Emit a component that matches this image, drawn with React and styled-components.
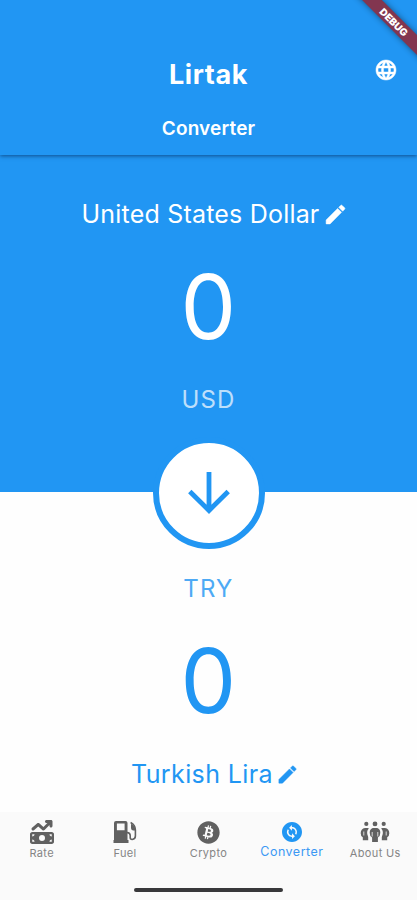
import React from "react";
import styled, { createGlobalStyle } from "styled-components";
import { MdChangeCircle, MdEdit, MdLanguage } from "react-icons/md";
import { FaBitcoin, FaMoneyBillTrendUp } from "react-icons/fa6";

const BLUE = "#2196f3";

const GlobalStyle = createGlobalStyle`
  * { box-sizing: border-box; }
  body { margin: 0; background: #fff; font-family: Inter, "Noto Sans", sans-serif; }
`;

const Screen = styled.div`
  position: relative;
  display: flex;
  flex-direction: column;
  width: 417px;
  height: 900px;
  overflow: hidden;
  background: #fefefe;
`;

const Header = styled.header`
  position: relative;
  z-index: 1;
  flex: none;
  display: grid;
  grid-template-columns: 62px 1fr 62px;
  grid-template-rows: 34px 18px;
  row-gap: 28px;
  align-content: start;
  align-items: center;
  height: 155px;
  padding-top: 58px;
  background: ${BLUE};
  color: #fff;
  text-align: center;
  box-shadow: 0 1px 4px rgba(0, 30, 70, 0.6);
`;

const Title = styled.h1`
  grid-column: 2;
  margin: 0;
  font-size: 27px;
  line-height: 34px;
  font-weight: 700;
  letter-spacing: 0.6px;
`;

const Subtitle = styled.h2`
  grid-column: 2;
  grid-row: 2;
  margin: 0;
  font-size: 19px;
  line-height: 18px;
  font-weight: 600;
  letter-spacing: 0.15px;
`;

const LanguageButton = styled.button`
  display: flex;
  justify-content: center;
  margin: -11px 0 0;
  padding: 0;
  border: 0;
  background: none;
  color: #fff;
  font-size: 24px;

  path:not([fill="none"]) { stroke: #fff; stroke-width: 0.5px; }
`;

const Panel = styled.section`
  flex: none;
  display: flex;
  flex-direction: column;
  align-items: center;
  height: ${({ $height }) => $height}px;
  padding-top: ${({ $top }) => $top}px;
  background: ${({ $bg }) => $bg};
  color: ${({ $color }) => $color};
`;

const CurrencyName = styled.div`
  display: flex;
  align-items: center;
  gap: ${({ $gap }) => $gap}px;
  height: 32px;
  margin-left: ${({ $shift }) => $shift}px;
  font-size: 25px;
  line-height: 32px;
  letter-spacing: ${({ $spacing }) => $spacing}px;
  white-space: nowrap;

  svg { font-size: ${({ $icon }) => $icon}px; }
  path:not([fill="none"]) {
    stroke: currentColor;
    stroke-width: 0.5px;
    stroke-linejoin: round;
  }
`;

const Amount = styled.div`
  height: 100px;
  margin: ${({ $margin }) => $margin};
  font-size: 90px;
  line-height: 100px;
  font-weight: 400;
  transform: scaleX(0.98);
`;

const Code = styled.div`
  height: 30px;
  font-size: 24px;
  line-height: 30px;
  letter-spacing: 1.2px;
  opacity: ${({ $opacity }) => $opacity};
`;

const SwapButton = styled.button`
  position: absolute;
  left: 153px;
  top: 437px;
  z-index: 2;
  display: grid;
  place-items: center;
  width: 112px;
  height: 112px;
  padding: 0;
  border: 6px solid ${BLUE};
  border-radius: 50%;
  background: #fff;
  color: ${BLUE};
`;

const Footer = styled.nav`
  flex: none;
  display: flex;
  flex-direction: column;
  height: 88px;
  background: #fafafa;
`;

const Tabs = styled.div`
  display: grid;
  grid-template-columns: repeat(5, 1fr);
  height: 76px;
`;

const Tab = styled.div`
  display: flex;
  flex-direction: column;
  align-items: center;
  padding-top: 8px;
  color: ${({ $active }) => ($active ? BLUE : "#616161")};
`;

const TabIcon = styled.div`
  display: grid;
  place-items: center;
  height: 24px;
  font-size: 24px;

  svg { display: block; }
`;

const TabLabel = styled.span`
  margin-top: ${({ $active }) => ($active ? 0 : 1)}px;
  font-size: ${({ $active }) => ($active ? 12.5 : 11)}px;
  line-height: 16px;
  letter-spacing: ${({ $active }) => ($active ? 0.5 : 0.35)}px;
  white-space: nowrap;
  color: ${({ $active }) => ($active ? "#3b98f4" : "#858585")};
`;

const HomeIndicator = styled.div`
  align-self: center;
  width: 149px;
  height: 4px;
  border-radius: 2px;
  background: #38383a;
`;

const DebugRibbon = styled.div`
  position: absolute;
  top: 15px;
  left: 340px;
  z-index: 3;
  width: 108px;
  height: 14px;
  transform: rotate(45deg);
  background: #823650;
  box-shadow: 0 0 6px rgba(0, 0, 0, 0.45);
  color: #fff;
  font-size: 10px;
  line-height: 14px;
  font-weight: 900;
  text-align: center;
`;

const ArrowDown = () => (
  <svg width="42" height="42" viewBox="0 0 42 42" fill="none" stroke="currentColor" strokeWidth="4.8">
    <path d="M21 0v38M1.8 19.5 21 38.5 40.2 19.5" />
  </svg>
);

const FuelPump = () => (
  <svg width="24" height="24" viewBox="0 0 24 24" fill="none">
    <path fill="currentColor" fillRule="evenodd" d="M3 1h9.5Q14.5 1 14.5 3V20h1v3H.5v-3H1V3Q1 1 3 1Zm.9 2.4v6.8h7.7V3.4Z" />
    <path stroke="currentColor" strokeWidth="1.6" d="M14 12.5q3.2.2 3.2 3v2q0 2 2 2 3.2-.4 3.2-3.4V10q0-5-4.8-7.5" />
    <path fill="currentColor" d="M18 3.8v4.4q.2 2.2 2.4 2.2h2Q22.4 6 18 3.8Z" />
  </svg>
);

const People = () => (
  <svg width="30" height="24" viewBox="0 0 30 24" fill="currentColor">
    <circle cx="6.3" cy="3.9" r="2.1" />
    <circle cx="23.7" cy="3.9" r="2.1" />
    <circle cx="15" cy="3.9" r="2.4" />
    <path d="M7.5 8H5Q.7 8.7.7 13.2q0 3.3 2.1 4v3h5.4v-3.3Q5.6 12 8.9 8.3Z" />
    <path d="M22.5 8H25q4.3.7 4.3 5.2 0 3.3-2.1 4v3h-5.4v-3.3q2.6-4.9-.7-8.6Z" />
    <path d="M12.7 8h4.6q3 1 3 4.8 0 3.5-2.4 4.7V22h-5.8v-4.5q-2.4-1.2-2.4-4.7 0-3.8 3-4.8Z" />
    <path d="M3.8 11.5v4M26.2 11.5v4M12.2 12v4.5M17.8 12v4.5" stroke="#fafafa" strokeWidth=".8" />
  </svg>
);

const TABS = [
  { label: "Rate", icon: <FaMoneyBillTrendUp /> },
  { label: "Fuel", icon: <FuelPump /> },
  { label: "Crypto", icon: <FaBitcoin size={23} /> },
  { label: "Converter", icon: <MdChangeCircle />, active: true },
  { label: "About Us", icon: <People /> },
];

export default function App() {
  return (
    <Screen>
      <GlobalStyle />
      <Header>
        <Title>Lirtak</Title>
        <LanguageButton aria-label="Language"><MdLanguage /></LanguageButton>
        <Subtitle>Converter</Subtitle>
      </Header>
      <Panel $height={337} $top={43} $bg={BLUE} $color="#fff">
        <CurrencyName $gap={4} $shift={13} $spacing={0.2} $icon={25}>
          United States Dollar <MdEdit />
        </CurrencyName>
        <Amount $margin="27px 0 28px">0</Amount>
        <Code $opacity={0.7}>USD</Code>
      </Panel>
      <Panel $height={320} $top={82} $bg="#fefefe" $color={BLUE}>
        <Code $opacity={0.8}>TRY</Code>
        <Amount $margin="27px 0 27px">0</Amount>
        <CurrencyName $gap={3} $shift={13} $spacing={0.4} $icon={23}>
          Turkish Lira <MdEdit />
        </CurrencyName>
      </Panel>
      <SwapButton aria-label="Swap currencies"><ArrowDown /></SwapButton>
      <Footer>
        <Tabs>
          {TABS.map(({ label, icon, active }) => (
            <Tab key={label} $active={active}>
              <TabIcon>{icon}</TabIcon>
              <TabLabel $active={active}>{label}</TabLabel>
            </Tab>
          ))}
        </Tabs>
        <HomeIndicator />
      </Footer>
      <DebugRibbon>DEBUG</DebugRibbon>
    </Screen>
  );
}
